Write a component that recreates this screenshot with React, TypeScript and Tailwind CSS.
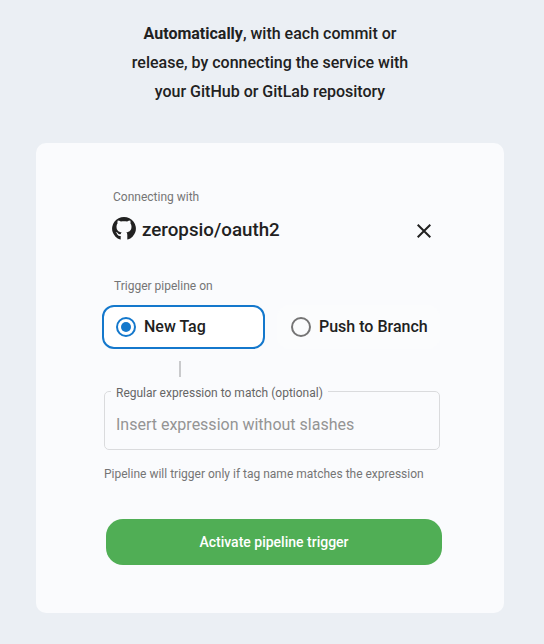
import React from "react";

function GithubMark() {
  return (
    <svg className="h-6 w-6 shrink-0" viewBox="0 0 24 24" fill="currentColor">
      <path d="M8.2 22.6A11.9 11.6 0 1 1 15.8 22.6Q15.3 22.6 15.3 22V18.3C15.3 16.6 14.9 15.7 14.3 15.2C17.3 14.9 19.5 13.6 19.5 9.4C19.5 8.2 19.1 7.2 18.4 6.3C18.7 5.3 18.6 4.4 18.2 3.4C17.2 3.4 16.1 3.9 15.1 4.6C13 4.1 11 4.1 8.9 4.6C7.9 3.9 6.8 3.4 5.8 3.4C5.4 4.4 5.3 5.3 5.6 6.3C4.9 7.2 4.5 8.2 4.5 9.4C4.5 13.6 6.7 14.9 9.7 15.2C9.2 15.6 8.9 16.3 8.8 17.1C7.6 17.6 6.4 17.3 5.7 16.1C5.2 15.3 4.4 14.8 3.6 15C4.9 15.6 4.9 17.2 5.7 18.1C6.4 19 7.6 19.1 8.7 18.9V22Q8.7 22.6 8.2 22.6Z" />
    </svg>
  );
}

function Radio({ checked }: { checked?: boolean }) {
  return (
    <svg className="h-5 w-5 shrink-0" viewBox="0 0 20 20" fill="none">
      <circle cx="10" cy="10" r="9" strokeWidth="2" className={checked ? "stroke-[#1478cc]" : "stroke-[#757575]"} />
      {checked && <circle cx="10" cy="10" r="5" className="fill-[#1478cc]" />}
    </svg>
  );
}

export default function App() {
  return (
    <div className="h-[644px] w-[544px] overflow-hidden bg-[#ebeff4] pt-[19px] font-['Roboto','Liberation_Sans',sans-serif] text-[#212121]">
      <p className="pr-1 text-center text-base leading-[29px] font-medium whitespace-nowrap">
        <strong className="font-bold">Automatically</strong>, with each commit or
        <br />
        release, by connecting the service with
        <br />
        your GitHub or GitLab repository
      </p>

      <main className="mt-[37px] ml-9 flex h-[470px] w-[468px] flex-col rounded-[10px] bg-[#fafbfd] pt-[46px]">
        <div className="ml-[77px] text-xs leading-4 text-[#757575]">Connecting with</div>
        <div className="mt-2.5 ml-[76px] flex h-7 items-center">
          <GithubMark />
          <span className="mt-px ml-1.5 text-[18.75px] leading-7 font-medium">zeropsio/oauth2</span>
          <button className="mt-1 ml-auto mr-[73px] flex">
            <svg className="h-[14px] w-[14px]" viewBox="0 0 14 14" fill="none" stroke="currentColor" strokeWidth="2">
              <path d="M0.7 0.7 13.3 13.3M13.3 0.7 0.7 13.3" />
            </svg>
          </button>
        </div>

        <div className="mt-[35px] ml-[78px] text-xs leading-4 text-[#757575]">Trigger pipeline on</div>
        <div className="mt-[11px] ml-[66px] flex gap-3">
          <label className="flex h-11 w-[163px] items-center gap-2 rounded-xl border-2 border-[#1478cc] bg-white pl-3">
            <Radio checked />
            <span className="text-base leading-6 font-medium">New Tag</span>
          </label>
          <label className="flex h-11 w-[163px] items-center gap-2 rounded-xl bg-[#fbfcfd] pl-3.5 whitespace-nowrap">
            <Radio />
            <span className="text-base leading-6 font-medium">Push to Branch</span>
          </label>
        </div>
        <div className="mt-3 ml-[143px] h-4 w-0.5 bg-[#c9cacc]" />

        <fieldset className="mt-1 ml-[68px] h-[69px] w-[336px] rounded-[5px] border border-[#dadbdd] pl-1.5">
          <legend className="px-[5px] pt-1 text-xs leading-4 text-[#666666]">
            Regular expression to match (optional)
          </legend>
          <div className="mt-3 pl-[5px] text-base leading-6 text-[#949494]">
            Insert expression without slashes
          </div>
        </fieldset>
        <div className="mt-4 ml-[68px] text-xs leading-4 text-[#757575]">
          Pipeline will trigger only if tag name matches the expression
        </div>

        <button className="mt-[37px] ml-[70px] h-[46px] w-[336px] rounded-[17px] bg-[#50ae55] text-sm leading-[46px] font-medium text-white">
          Activate pipeline trigger
        </button>
      </main>
    </div>
  );
}
